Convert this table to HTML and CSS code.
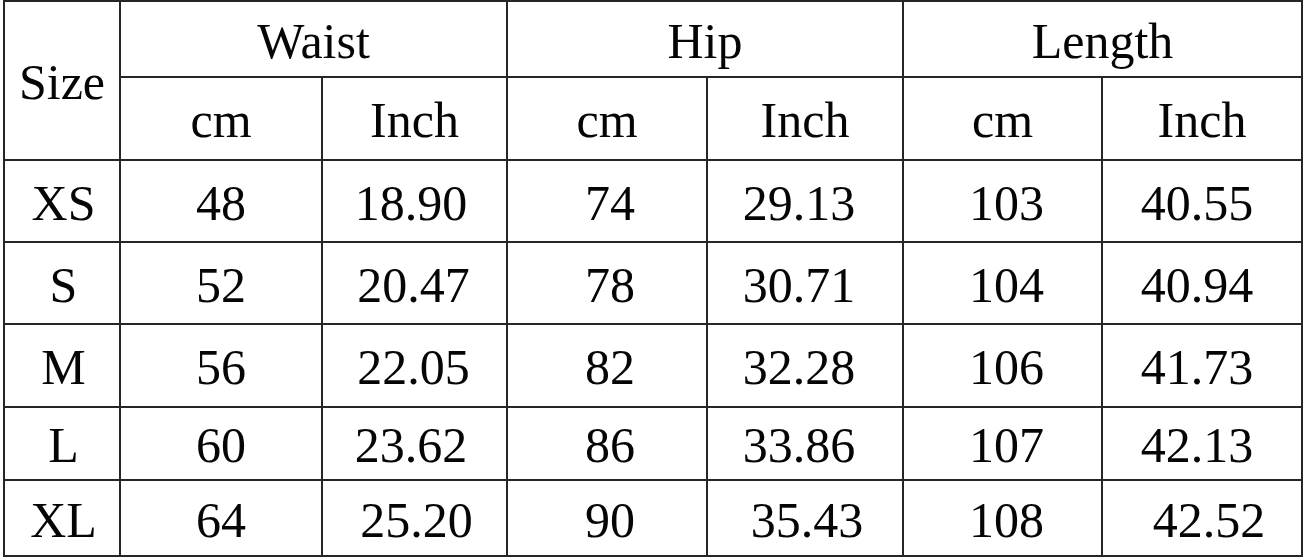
FILE: index.html
```html
<!DOCTYPE html>
<html>
<head>
<meta charset="utf-8">
<link rel="stylesheet" href="styles.css">
</head>
<body>
<table class="size-table">
  <colgroup>
    <col class="c-size">
    <col class="c-wcm">
    <col class="c-win">
    <col class="c-hcm">
    <col class="c-hin">
    <col class="c-lcm">
    <col class="c-lin">
  </colgroup>
  <tr class="r-h1">
    <td rowspan="2">Size</td>
    <td colspan="2">Waist</td>
    <td colspan="2">Hip</td>
    <td colspan="2">Length</td>
  </tr>
  <tr class="r-h2">
    <td>cm</td><td>Inch</td>
    <td>cm</td><td>Inch</td>
    <td>cm</td><td>Inch</td>
  </tr>
  <tr class="data r-xs">
    <td>XS</td><td>48</td><td>18.90</td><td>74</td><td>29.13</td><td>103</td><td>40.55</td>
  </tr>
  <tr class="data r-s">
    <td>S</td><td>52</td><td class="r1">20.47</td><td>78</td><td>30.71</td><td>104</td><td>40.94</td>
  </tr>
  <tr class="data r-m">
    <td>M</td><td>56</td><td class="r1">22.05</td><td>82</td><td>32.28</td><td>106</td><td>41.73</td>
  </tr>
  <tr class="data r-l">
    <td>L</td><td>60</td><td>23.62</td><td>86</td><td>33.86</td><td>107</td><td>42.13</td>
  </tr>
  <tr class="data r-xl">
    <td>XL</td><td>64</td><td>25.20</td><td>90</td><td>35.43</td><td>108</td><td>42.52</td>
  </tr>
</table>
</body>
</html>
```
FILE: styles.css
```css
html, body {
  margin: 0;
  padding: 0;
  background: #ffffff;
}

.size-table {
  margin: 0 0 0 3px;
  border-collapse: separate;
  border-spacing: 0;
  table-layout: fixed;
  width: 1300px;
  border-top: 2px solid #262626;
  border-left: 2px solid #262626;
  font-family: "Liberation Serif", "Times New Roman", serif;
  font-size: 50px;
  color: #050505;
}

.size-table td {
  box-sizing: border-box;
  border-right: 2px solid #262626;
  border-bottom: 2px solid #262626;
  padding: 3px 0 0 0;
  text-align: center;
  vertical-align: middle;
  line-height: 1;
  white-space: nowrap;
}

.c-size { width: 116px; }
.c-wcm { width: 202px; }
.c-win { width: 185px; }
.c-hcm { width: 200px; }
.c-hin { width: 196px; }
.c-lcm { width: 199px; }
.c-lin { width: 200px; }

.r-h1 { height: 76px; }
.r-h2 { height: 83px; }
.r-xs { height: 82px; }
.r-s { height: 82px; }
.r-m { height: 83px; }
.r-l { height: 73px; }
.r-xl { height: 76px; }

/* small per-column offsets of the values, as in the original sheet */
.data td:nth-child(1) { padding-left: 3px; }
.data td:nth-child(3) { padding-right: 7px; }
.data td:nth-child(4) { padding-left: 6px; }
.data td:nth-child(5) { padding-right: 12px; }
.data td:nth-child(6) { padding-left: 8px; }
.data td:nth-child(7) { padding-right: 10px; }

.data td.r1 { padding-right: 2px; }

.r-xl td:nth-child(3) { padding-right: 0; padding-left: 4px; }
.r-xl td:nth-child(5) { padding-right: 0; padding-left: 4px; }
.r-xl td:nth-child(7) { padding-right: 0; padding-left: 14px; }
```
